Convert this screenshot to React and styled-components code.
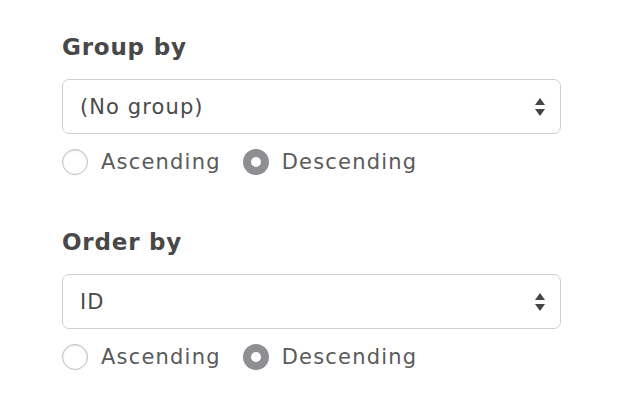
import React, { useState } from 'react'
import styled, { createGlobalStyle } from 'styled-components'

const Global = createGlobalStyle`
  body{
    margin:0;
    background:#fff;
    font-family:"DejaVu Sans","Open Sans",sans-serif;
  }
`;

const Page = styled.div`
  width:626px;
  height:404px;
  padding:30px 0 0 62px;
  box-sizing:border-box;
  display:flex;
  flex-direction:column;
  gap:50px;
`;

const Section = styled.div`
  display:flex;
  flex-direction:column;
`;

const Label = styled.div`
  font-size:23px;
  font-weight:bold;
  letter-spacing:0.8px;
  color:#484848;
  line-height:34px;
  margin-bottom:15px;
`;

const SelectBox = styled.div`
  width:499px;
  height:55px;
  box-sizing:border-box;
  border:1.5px solid #cfcfcf;
  border-radius:7px;
  display:flex;
  align-items:center;
  justify-content:space-between;
  padding:0 14px 0 17px;
  font-size:21px;
  letter-spacing:1.1px;
  color:#4a4a4a;
`;

const Radios = styled.div`
  display:flex;
  align-items:center;
  gap:22px;
  margin-top:15px;
`;

const Option = styled.label`
  display:flex;
  align-items:center;
  gap:13px;
  font-size:21px;
  letter-spacing:1.2px;
  color:#5a5a5a;
  cursor:pointer;
`;

const Dot = styled.span`
  width:26px;
  height:26px;
  flex:none;
  border-radius:50%;
  box-sizing:border-box;
  display:flex;
  align-items:center;
  justify-content:center;
  background:${p => p.$on ? '#8e8e93' : '#fff'};
  border:${p => p.$on ? 'none' : '1px solid #bdbdbd'};
  box-shadow:${p => p.$on ? 'none' : 'inset 0 1px 2px rgba(0,0,0,0.1)'};
  &::after{
    content:"";
    display:${p => p.$on ? 'block' : 'none'};
    width:10px;
    height:10px;
    border-radius:50%;
    background:#fff;
  }
`;

const Arrows = () => (
  <svg width="12" height="20" viewBox="0 0 12 20">
    <path d="M6 1 L11 8 L1 8 Z" fill="#444" />
    <path d="M6 19 L11 12 L1 12 Z" fill="#444" />
  </svg>
);

function Block({ label, value }) {
  const [dir, setDir] = useState('desc');
  return (
    <Section>
      <Label>{label}</Label>
      <SelectBox>
        <span>{value}</span>
        <Arrows />
      </SelectBox>
      <Radios>
        <Option onClick={() => setDir('asc')}>
          <Dot $on={dir === 'asc'} />
          Ascending
        </Option>
        <Option onClick={() => setDir('desc')}>
          <Dot $on={dir === 'desc'} />
          Descending
        </Option>
      </Radios>
    </Section>
  );
}

export default function App() {
  return (
    <>
      <Global />
      <Page>
        <Block label="Group by" value="(No group)" />
        <Block label="Order by" value="ID" />
      </Page>
    </>
  );
}
